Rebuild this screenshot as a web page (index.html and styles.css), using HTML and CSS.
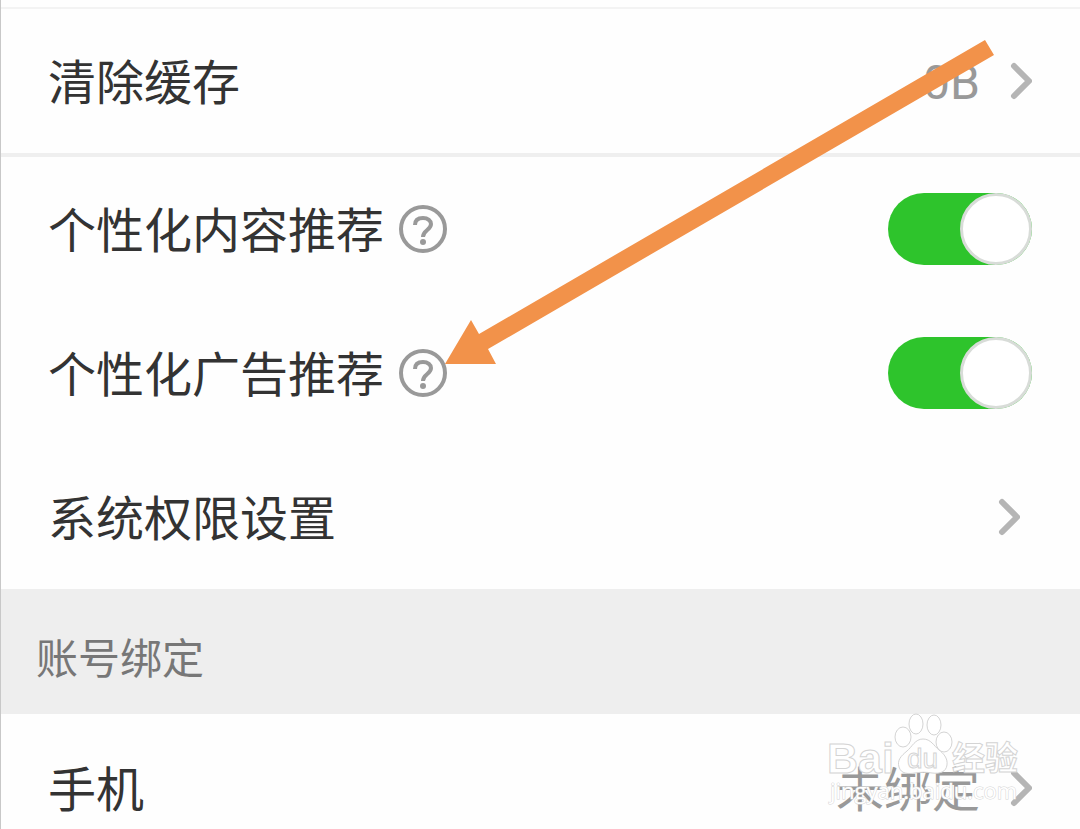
FILE: index.html
```
<!DOCTYPE html>
<html lang="zh-CN">
<head>
  <meta charset="utf-8">
  <meta name="viewport" content="width=device-width, initial-scale=1">
  <title>设置</title>
  <link rel="stylesheet" href="styles.css">
</head>
<body>
  <main class="screen">
    <section class="group group-cache">
      <button class="row" type="button">
        <span class="label">清除缓存</span>
        <span class="value value-size">0B</span>
        <svg class="chevron" viewBox="0 0 22 38" aria-hidden="true"><path d="M4 4 19 19 4 34"/></svg>
      </button>
    </section>

    <section class="group">
      <div class="row">
        <label class="label" for="content-rec">个性化内容推荐</label>
        <button class="help" type="button" aria-label="个性化内容推荐说明">
          <svg viewBox="0 0 48 48" aria-hidden="true"><circle class="ring" cx="24" cy="24" r="22"/><path class="hook" d="M16 20C16 15 19 13 24 13C29 13 32 16 32 19C32 25 24 25 24 32"/><circle class="dot" cx="24" cy="37" r="3"/></svg>
        </button>
        <input class="switch" id="content-rec" type="checkbox" role="switch" checked>
      </div>
      <div class="row">
        <label class="label" for="ad-rec">个性化广告推荐</label>
        <button class="help" type="button" aria-label="个性化广告推荐说明">
          <svg viewBox="0 0 48 48" aria-hidden="true"><circle class="ring" cx="24" cy="24" r="22"/><path class="hook" d="M16 20C16 15 19 13 24 13C29 13 32 16 32 19C32 25 24 25 24 32"/><circle class="dot" cx="24" cy="37" r="3"/></svg>
        </button>
        <input class="switch" id="ad-rec" type="checkbox" role="switch" checked>
      </div>
      <button class="row row-inset" type="button">
        <span class="label">系统权限设置</span>
        <svg class="chevron" viewBox="0 0 22 38" aria-hidden="true"><path d="M4 4 19 19 4 34"/></svg>
      </button>
    </section>

    <h2 class="section-title">账号绑定</h2>

    <section class="group">
      <button class="row row-phone" type="button">
        <span class="label">手机</span>
        <span class="value">未绑定</span>
        <svg class="chevron" viewBox="0 0 22 38" aria-hidden="true"><path d="M4 4 19 19 4 34"/></svg>
      </button>
    </section>

    <svg class="arrow" viewBox="0 0 550 326" aria-hidden="true"><path d="M541 1 550 16 44 310 52 325H1L27 281 35 295Z"/></svg>

    <svg class="watermark" viewBox="0 0 200 100" role="img" aria-label="Baidu 经验">
      <text class="mark-latin" x="3" y="63">Bai</text>
      <g class="paw">
        <ellipse cx="79" cy="27" rx="8" ry="10"/>
        <ellipse cx="92" cy="14" rx="7" ry="10"/>
        <ellipse cx="110" cy="15" rx="7" ry="10"/>
        <ellipse cx="120" cy="32" rx="8" ry="10"/>
        <path d="M99 29C91 29 88 37 83 41C77 46 73 50 75 57C77 64 84 64 91 63C97 62 102 62 108 63C116 64 122 62 123 55C124 48 119 43 115 40C110 36 107 29 99 29Z"/>
      </g>
      <text class="mark-du" x="83" y="58">du</text>
      <text class="mark-cjk" x="128" y="60">经验</text>
      <text class="mark-url" x="6" y="89">jingyan.baidu.com</text>
    </svg>
  </main>
</body>
</html>
```
FILE: styles.css
```
*,
*::before {
  box-sizing: border-box;
}

body {
  margin: 0;
  background: #fefefe;
  color: #333;
  font-family: Roboto, "Noto Sans CJK SC", sans-serif;
}

.screen {
  position: relative;
  height: 100vh;
  overflow: hidden;
  padding-top: 7px;
  border-left: 1px solid #c8c8c8;
}

.group-cache {
  border-top: 2px solid #f3f3f3;
  border-bottom: 4px solid #efefef;
}

.row {
  display: flex;
  align-items: center;
  width: 100%;
  height: 144px;
  margin: 0;
  padding: 0 48px 0 47px;
  border: 0;
  background: none;
  color: inherit;
  font: inherit;
  font-size: 48px;
  line-height: 72px;
  text-align: left;
}

.row-inset {
  padding-right: 60px;
}

.row-phone {
  height: 148px;
}

.label,
.value {
  padding-top: 6px;
}

.value {
  margin-left: auto;
  color: #999;
}

.value-size {
  padding-top: 4px;
}

.chevron {
  flex: none;
  width: 22px;
  height: 38px;
  margin-left: 30px;
  fill: none;
  stroke: #b5b5b5;
  stroke-width: 6px;
  stroke-linecap: round;
  stroke-linejoin: round;
}

.row-inset .chevron {
  margin-left: auto;
}

.help {
  width: 48px;
  height: 48px;
  margin-left: 15px;
  padding: 0;
  border: 0;
  background: none;
}

.help svg {
  display: block;
}

.ring,
.hook {
  fill: none;
  stroke: #999;
  stroke-width: 4px;
}

.dot {
  fill: #999;
}

.switch {
  appearance: none;
  display: flex;
  justify-content: flex-end;
  width: 144px;
  height: 72px;
  margin: 0 0 0 auto;
  border-radius: 36px;
  background: #2ec42c;
}

.switch::before {
  content: "";
  width: 72px;
  height: 72px;
  border: 3px solid #d8dcd8;
  border-radius: 50%;
  background: #fff;
}

.switch:not(:checked) {
  justify-content: flex-start;
  background: #ddd;
}

.section-title {
  margin: 0;
  padding: 46px 35px 29px;
  background: #eee;
  color: #777;
  font-size: 42px;
  font-weight: 400;
  line-height: 50px;
}

.arrow {
  position: absolute;
  top: 39px;
  left: 443px;
  width: 550px;
  height: 326px;
  fill: #f2924a;
  pointer-events: none;
}

.watermark {
  position: absolute;
  top: 710px;
  left: 823px;
  width: 200px;
  height: 100px;
  fill: #fff;
  stroke: #d4d4d4;
  stroke-width: 1px;
  pointer-events: none;
}

.mark-latin {
  font: 700 43px "Liberation Sans", sans-serif;
}

.mark-du {
  font: 400 28px "Liberation Sans", sans-serif;
}

.mark-cjk {
  font: 700 33px "Noto Sans CJK SC", sans-serif;
}

.mark-url {
  font: 400 22px "Open Sans", sans-serif;
  paint-order: stroke;
}
```
